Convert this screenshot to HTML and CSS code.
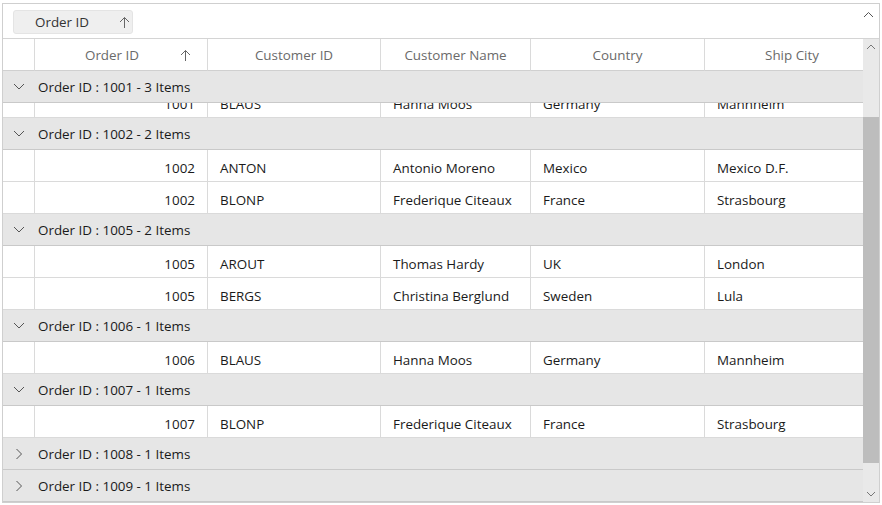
FILE: index.html
```html
<!DOCTYPE html>
<html>
<head>
<meta charset="utf-8">
<link rel="stylesheet" href="styles.css">
</head>
<body>
<div class="grid">
  <div class="drop">
    <div class="chip"><span>Order ID</span>
      <svg class="arrow" width="11" height="12" viewBox="0 0 11 12"><path d="M5.5 1.5V12M1 6L5.5 1.5L10 6" fill="none" stroke="#666" stroke-width="1"/></svg>
    </div>
    <svg class="collapse" width="11" height="7" viewBox="0 0 11 7"><path d="M1 6L5.5 1.5L10 6" fill="none" stroke="#555" stroke-width="1"/></svg>
  </div>
  <div class="main">
    <div class="head row">
      <div class="cell ind"></div>
      <div class="cell hc sorted"><span>Order ID</span>
        <svg class="arrow" width="11" height="12" viewBox="0 0 11 12"><path d="M5.5 1.5V12M1 6L5.5 1.5L10 6" fill="none" stroke="#666" stroke-width="1"/></svg>
      </div>
      <div class="cell hc">Customer ID</div>
      <div class="cell hc">Customer Name</div>
      <div class="cell hc">Country</div>
      <div class="cell hc">Ship City</div>
    </div>

    <div class="group"><svg class="chev" width="12" height="7" viewBox="0 0 12 7"><path d="M1 1L6 6L11 1" fill="none" stroke="#555"/></svg>Order ID : 1001 - 3 Items</div>
    <div class="clip">
      <div class="row data">
        <div class="cell ind"></div><div class="cell num">1001</div><div class="cell">BLAUS</div><div class="cell">Hanna Moos</div><div class="cell">Germany</div><div class="cell">Mannheim</div>
      </div>
    </div>

    <div class="group"><svg class="chev" width="12" height="7" viewBox="0 0 12 7"><path d="M1 1L6 6L11 1" fill="none" stroke="#555"/></svg>Order ID : 1002 - 2 Items</div>
    <div class="row data"><div class="cell ind"></div><div class="cell num">1002</div><div class="cell">ANTON</div><div class="cell">Antonio Moreno</div><div class="cell">Mexico</div><div class="cell">Mexico D.F.</div></div>
    <div class="row data"><div class="cell ind"></div><div class="cell num">1002</div><div class="cell">BLONP</div><div class="cell">Frederique Citeaux</div><div class="cell">France</div><div class="cell">Strasbourg</div></div>

    <div class="group"><svg class="chev" width="12" height="7" viewBox="0 0 12 7"><path d="M1 1L6 6L11 1" fill="none" stroke="#555"/></svg>Order ID : 1005 - 2 Items</div>
    <div class="row data"><div class="cell ind"></div><div class="cell num">1005</div><div class="cell">AROUT</div><div class="cell">Thomas Hardy</div><div class="cell">UK</div><div class="cell">London</div></div>
    <div class="row data"><div class="cell ind"></div><div class="cell num">1005</div><div class="cell">BERGS</div><div class="cell">Christina Berglund</div><div class="cell">Sweden</div><div class="cell">Lula</div></div>

    <div class="group"><svg class="chev" width="12" height="7" viewBox="0 0 12 7"><path d="M1 1L6 6L11 1" fill="none" stroke="#555"/></svg>Order ID : 1006 - 1 Items</div>
    <div class="row data"><div class="cell ind"></div><div class="cell num">1006</div><div class="cell">BLAUS</div><div class="cell">Hanna Moos</div><div class="cell">Germany</div><div class="cell">Mannheim</div></div>

    <div class="group"><svg class="chev" width="12" height="7" viewBox="0 0 12 7"><path d="M1 1L6 6L11 1" fill="none" stroke="#555"/></svg>Order ID : 1007 - 1 Items</div>
    <div class="row data"><div class="cell ind"></div><div class="cell num">1007</div><div class="cell">BLONP</div><div class="cell">Frederique Citeaux</div><div class="cell">France</div><div class="cell">Strasbourg</div></div>

    <div class="group"><svg class="chev" width="12" height="12" viewBox="0 0 12 12"><path d="M3.5 1L8.5 6L3.5 11" fill="none" stroke="#555"/></svg>Order ID : 1008 - 1 Items</div>
    <div class="group"><svg class="chev" width="12" height="12" viewBox="0 0 12 12"><path d="M3.5 1L8.5 6L3.5 11" fill="none" stroke="#555"/></svg>Order ID : 1009 - 1 Items</div>

    <div class="vscroll">
      <div class="sbtn"><svg width="10" height="6" viewBox="0 0 10 6"><path d="M1 5L5 1L9 5" fill="none" stroke="#777"/></svg></div>
      <div class="track"><div class="thumb"></div></div>
      <div class="sbtn"><svg width="10" height="6" viewBox="0 0 10 6"><path d="M1 1L5 5L9 1" fill="none" stroke="#777"/></svg></div>
    </div>
  </div>
</div>
</body>
</html>
```
FILE: styles.css
```css
* { box-sizing: border-box; }
body {
  margin: 0;
  background: #fff;
  font-family: "Open Sans", "Noto Sans", sans-serif;
  font-size: 13.4px;
  color: #1a1a1a;
}
.grid {
  margin: 3px 0 0 2px;
  width: 878px;
  height: 500px;
  border: 1px solid #cfcfcf;
  display: flex;
  flex-direction: column;
  overflow: hidden;
}
.drop {
  height: 35px;
  flex: none;
  border-bottom: 1px solid #d4d4d4;
  display: flex;
  align-items: flex-start;
  padding: 6px 0 0 10px;
  position: relative;
}
.chip {
  width: 120px;
  height: 24px;
  background: #efefef;
  border: 1px solid #e4e4e4;
  border-radius: 3px;
  display: flex;
  align-items: center;
  padding-left: 21px;
  color: #333;
}
.chip .arrow { margin-left: 30px; margin-top: -1px; }
.collapse { position: absolute; right: 5px; top: 7px; }
.main {
  position: relative;
  flex: 1;
  overflow: hidden;
}
.row {
  display: grid;
  grid-template-columns: 32px 173px 173px 150px 174px 1fr;
  height: 32px;
}
.cell {
  border-right: 1px solid #dadada;
  border-bottom: 1px solid #dadada;
  display: flex;
  align-items: center;
  padding: 0 12px;
  white-space: nowrap;
  overflow: hidden;
}
.data .cell { padding-top: 4px; }
.cell:last-child { border-right: none; }
.head .cell { border-bottom-color: #d0d0d0; }
.hc {
  justify-content: center;
  color: #6a6a6a;
}
.hc.sorted { padding: 0 18px 0 0; position: relative; }
.hc.sorted .arrow { position: absolute; right: 16px; top: 10px; }
.num { justify-content: flex-end; }
.group {
  height: 32px;
  width: 860px;
  background: #e6e6e6;
  border-bottom: 1px solid #c9c9c9;
  display: flex;
  align-items: center;
  padding-left: 10px;
  color: #1a1a1a;
}
.chev { margin-right: 13px; }
.clip {
  height: 15px;
  overflow: hidden;
  border-bottom: 1px solid #dadada;
}
.clip .row { margin-top: -17px; }
.vscroll {
  position: absolute;
  right: 0;
  top: 0;
  bottom: 0;
  width: 16px;
  background: #e9e9e9;
  display: flex;
  flex-direction: column;
}
.sbtn {
  height: 16px;
  display: flex;
  align-items: center;
  justify-content: center;
  flex: none;
}
.track {
  flex: 1;
  padding-top: 62px;
  padding-bottom: 23px;
  display: flex;
}
.thumb {
  flex: 1;
  background: #bdbdbd;
}
```
